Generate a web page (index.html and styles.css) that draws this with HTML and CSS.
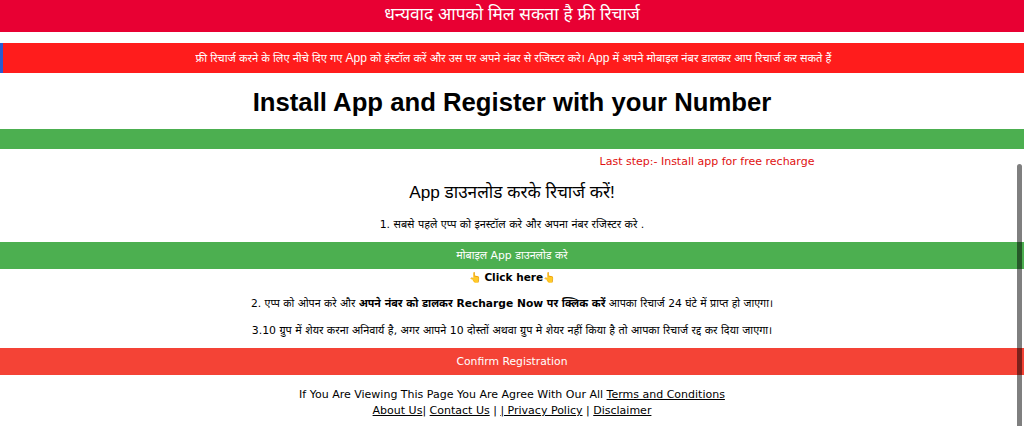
FILE: index.html
```html
<!DOCTYPE html>
<html lang="hi">
<head>
<meta charset="utf-8">
<title>Install App</title>
<link rel="stylesheet" href="styles.css">
</head>
<body>
<header class="topbar">धन्यवाद आपको मिल सकता है फ्री रिचार्ज</header>
<div class="notice">फ्री रिचार्ज करने के लिए नीचे दिए गए <span class="en">App</span> को इंस्टॉल करें और उस पर अपने नंबर से रजिस्टर करे। <span class="en">App</span> में अपने मोबाइल नंबर डालकर आप रिचार्ज कर सकते हैं</div>
<h1 class="title">Install App and Register with your Number</h1>
<div class="greenbar"></div>
<p class="laststep">Last step:- Install app for free recharge</p>
<h2 class="subtitle">App डाउनलोड करके रिचार्ज करें!</h2>
<p class="step step-one">1. सबसे पहले एप्प को इनस्टॉल करे और अपना नंबर रजिस्टर करे .</p>
<a class="btn btn-green">मोबाइल App डाउनलोड करे</a>
<p class="clickhere"><span class="hand">👆</span> <b class="clicktext">Click here</b><span class="hand">👆</span></p>
<p class="step step-two">2. एप्प को ओपन करे और <b>अपने नंबर को डालकर Recharge Now पर क्लिक करें</b> आपका रिचार्ज 24 घंटे में प्राप्त हो जाएगा।</p>
<p class="step step-three">3.10 ग्रुप में शेयर करना अनिवार्य है, अगर आपने 10 दोस्तों अथवा ग्रुप मे शेयर नहीं किया है तो आपका रिचार्ज रद्द कर दिया जाएगा।</p>
<a class="btn btn-red">Confirm Registration</a>
<footer class="foot">
  <div>If You Are Viewing This Page You Are Agree With Our All <a href="#">Terms and Conditions</a></div>
  <div><a href="#">About Us</a>| <a href="#">Contact Us</a> | <a href="#">| Privacy Policy</a> | <a href="#">Disclaimer</a></div>
</footer>
<div class="scrollthumb"></div>
</body>
</html>
```
FILE: styles.css
```css
* { box-sizing: border-box; }
html, body { margin: 0; padding: 0; height: 426px; overflow: hidden; }
body {
  position: relative;
  background: #fff;
  color: #000;
  font-family: "DejaVu Sans", "Noto Sans", sans-serif;
  font-size: 11px;
  text-align: center;
}
.topbar {
  height: 32px;
  line-height: 28px;
  background: #e80033;
  color: #fff;
  font-size: 17.3px;
  font-family: "Liberation Sans", "Noto Sans", sans-serif;
}
.notice {
  margin-top: 11px;
  height: 30px;
  line-height: 30px;
  background: #ff1c1c;
  border-left: 3px solid #2a5bd0;
  color: #fff;
  font-size: 11.15px;
  font-family: "Liberation Sans", "Noto Sans", sans-serif;
}
.en { font-size: 12px; }
.title {
  margin: 0;
  height: 56px;
  line-height: 59px;
  font-family: "Liberation Sans", sans-serif;
  font-size: 25.7px;
  font-weight: 700;
}
.greenbar { height: 20px; background: #4caf50; }
.laststep {
  margin: 0;
  height: 24px;
  line-height: 25px;
  padding-left: 390px;
  color: #e01010;
}
.subtitle {
  margin: 0;
  height: 38px;
  line-height: 38px;
  font-size: 17.2px;
  font-weight: 400;
  font-family: "Liberation Sans", "Noto Sans", sans-serif;
}
.step { margin: 0; font-size: 10.9px; }
.step-one { height: 31px; line-height: 28px; }
.btn { display: block; color: #fff; height: 27px; line-height: 27px; font-size: 10.8px; }
.btn-green { background: #4caf50; }
.btn-red { background: #f44336; line-height: 28px; }
.clickhere { margin: 0; height: 18px; line-height: 17px; }
.clicktext { font-size: 10.5px; }
.hand { font-size: 10px; }
.step-two { height: 32px; line-height: 33px; font-size: 10.7px; }
.step-three { height: 29px; line-height: 23px; }
.foot { padding-top: 12px; line-height: 16px; }
.foot a { color: #000; text-decoration: underline; }
.scrollthumb {
  position: absolute;
  right: 2px;
  top: 164px;
  bottom: 0;
  width: 5px;
  border-radius: 3px 3px 0 0;
  background: rgba(0, 0, 0, 0.5);
}
```
